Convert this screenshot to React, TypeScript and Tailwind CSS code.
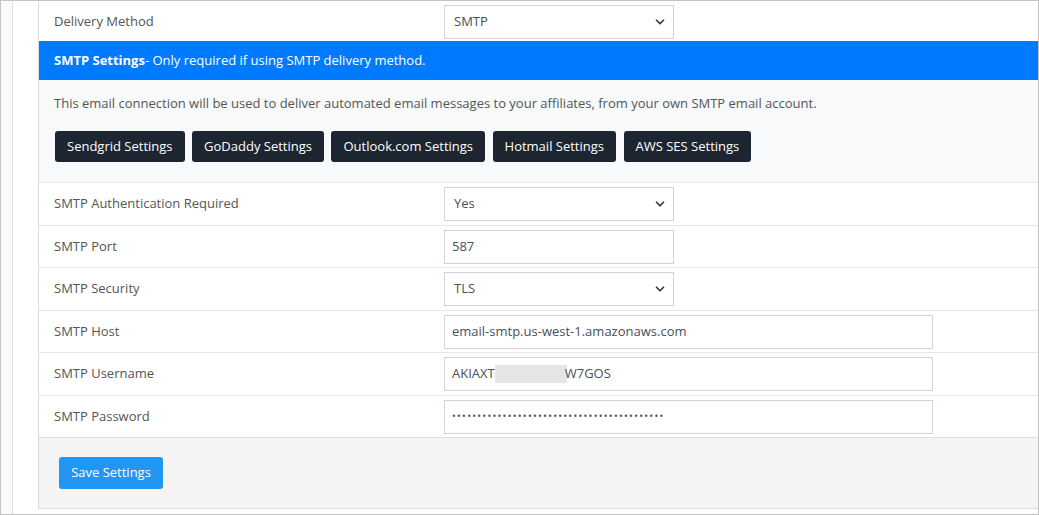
import { ChevronDown } from 'lucide-react'

const buttons = ['Sendgrid Settings', 'GoDaddy Settings', 'Outlook.com Settings', 'Hotmail Settings', 'AWS SES Settings']

function SelectBox({ value, className = '' }: { value: string; className?: string }) {
  return (
    <div className={`relative h-[34px] w-[230px] ${className}`}>
      <div className="h-full w-full border border-[#ced4da] bg-white pl-[9px] flex items-center text-[13px] text-[#495057]">
        {value}
      </div>
      <ChevronDown className="absolute right-[7px] top-[10px] h-[14px] w-[14px] text-[#343a40]" strokeWidth={3} />
    </div>
  )
}

function TextBox({ children, wide = false }: { children: React.ReactNode; wide?: boolean }) {
  return (
    <div
      className={`h-[34px] ${wide ? 'w-[489px]' : 'w-[230px]'} border border-[#ced4da] bg-white pl-[7px] flex items-center text-[13px] text-[#495057] whitespace-nowrap overflow-hidden`}
    >
      {children}
    </div>
  )
}

function Row({ label, tall, children }: { label: string; tall: boolean; children: React.ReactNode }) {
  return (
    <div className={`flex items-center border-t border-[#e6e6e6] ${tall ? 'h-[43px]' : 'h-[42px]'}`}>
      <div className="w-[405px] pl-[15px] text-[13px] text-[#555555]">{label}</div>
      {children}
    </div>
  )
}

export default function App() {
  return (
    <div className="w-[1039px] h-[515px] border border-[#c3c3c3] bg-white flex font-['Open_Sans',sans-serif]">
      <div className="w-[11px] bg-[#fafafa]" />
      <div className="w-[26px] border-l border-[#dedede] bg-white" />
      <div className="flex-1 pb-[4px]">
        <div className="border-l border-b border-[#dadada]">
          {/* Delivery method */}
          <div className="flex items-center h-[40px] pt-[1px]">
            <div className="w-[405px] pl-[15px] text-[13px] text-[#555555]">Delivery Method</div>
            <SelectBox value="SMTP" />
          </div>

          {/* SMTP header */}
          <div className="h-[39px] bg-[#007bff] flex items-center pl-[15px] text-[13px] text-white">
            <span className="font-bold">SMTP Settings</span>
            <span>- Only required if using SMTP delivery method.</span>
          </div>

          {/* Info + presets */}
          <div className="h-[102px] bg-[#f8f9fa] pl-[15px] pt-[14px]">
            <p className="text-[13px] leading-[18px] text-[#555555]">
              This email connection will be used to deliver automated email messages to your affiliates, from your own SMTP email account.
            </p>
            <div className="mt-[19px] ml-[1px] flex gap-[7.5px]">
              {buttons.map((b) => (
                <button
                  key={b}
                  className="h-[31px] px-[12px] rounded-[3px] bg-[#1d2630] text-[13px] text-white"
                >
                  {b}
                </button>
              ))}
            </div>
          </div>

          {/* Fields */}
          <Row label="SMTP Authentication Required" tall>
            <SelectBox value="Yes" />
          </Row>
          <Row label="SMTP Port" tall={false}>
            <TextBox>587</TextBox>
          </Row>
          <Row label="SMTP Security" tall>
            <SelectBox value="TLS" />
          </Row>
          <Row label="SMTP Host" tall={false}>
            <TextBox wide>email-smtp.us-west-1.amazonaws.com</TextBox>
          </Row>
          <Row label="SMTP Username" tall>
            <TextBox wide>
              <span>AKIAXT</span>
              <span className="inline-block h-[18px] w-[72px] bg-[#e6e6e6]" />
              <span className="-ml-[2px]">W7GOS</span>
            </TextBox>
          </Row>
          <Row label="SMTP Password" tall={false}>
            <TextBox wide>
              <span className="text-[10px] tracking-[1.3px]">{'•'.repeat(42)}</span>
            </TextBox>
          </Row>

          {/* Footer */}
          <div className="border-t border-[#e0e0e0] bg-[#f4f4f4] px-[20px] py-[19px]">
            <button className="h-[32px] w-[104px] rounded-[3px] bg-[#2196f3] text-[13px] text-white">
              Save Settings
            </button>
          </div>
        </div>
      </div>
    </div>
  )
}
